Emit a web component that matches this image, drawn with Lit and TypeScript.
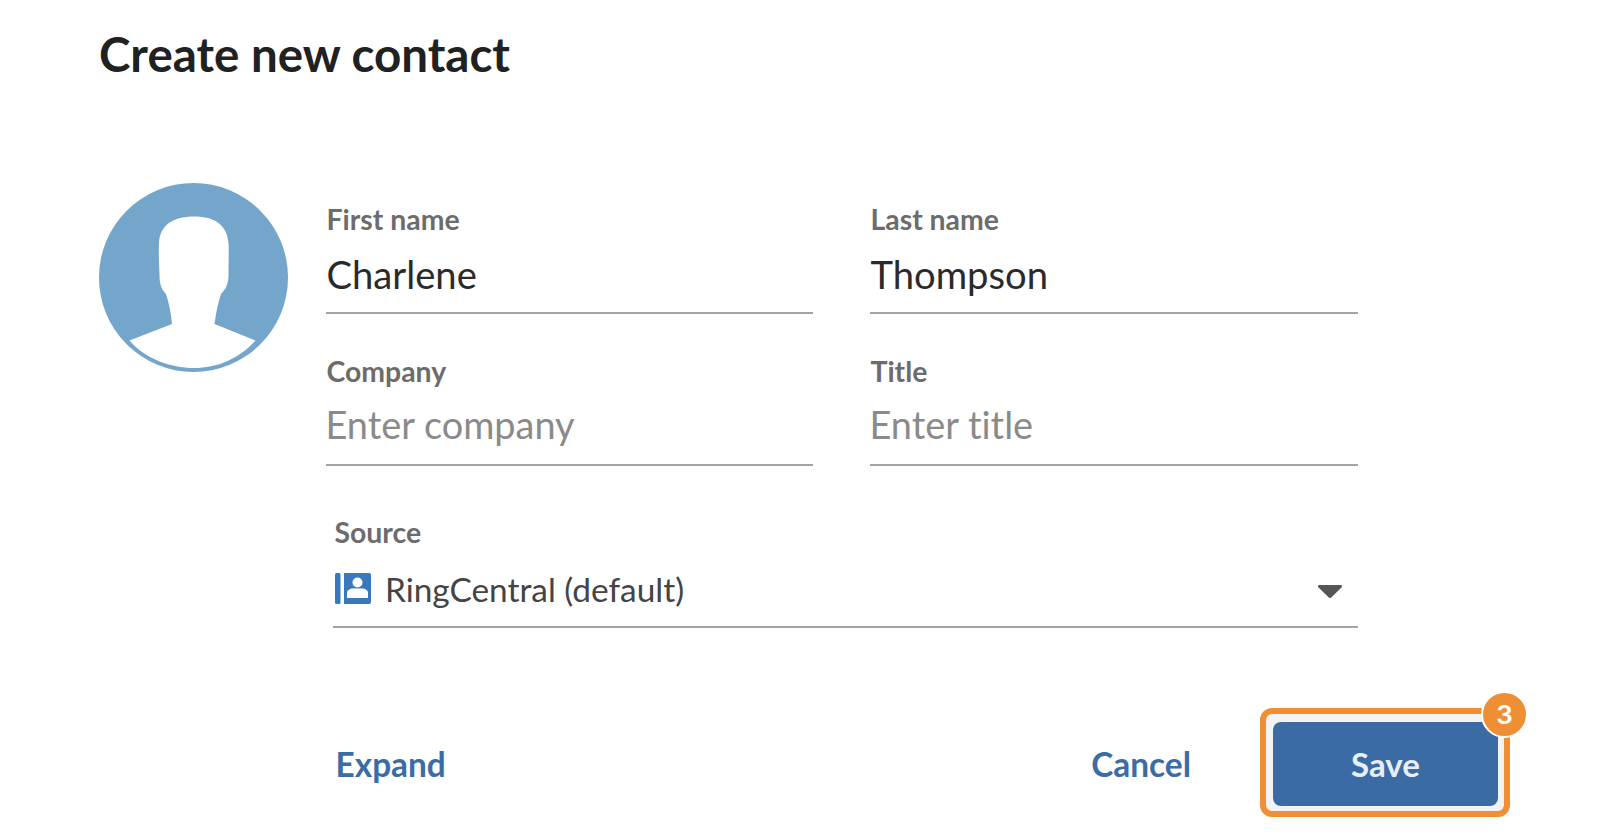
import { LitElement, html, css } from "lit";
import { customElement } from "lit/decorators.js";

@customElement("app-root")
export class AppRoot extends LitElement {
  static styles = css`
    :host { display: block; width: 1600px; height: 834px; background: #fff; font-family: Lato, "Liberation Sans", sans-serif; font-variant-ligatures: none; color: #222; overflow: hidden; }
    .page { display: flex; flex-direction: column; padding: 24px 0 0 99px; }
    h1 { margin: 0; font-size: 47.5px; line-height: 60px; font-weight: 700; color: #1f2123; }
    .body { display: flex; margin-top: 98.5px; }
    .avatar { width: 189px; height: 189px; flex: none; display: block; margin: 0 38px 0 -0.5px; }
    .form { display: flex; flex-direction: column; flex: none; }
    .grid { display: grid; grid-template-columns: 487.5px 488.5px; column-gap: 56.5px; row-gap: 39.5px; margin-top: 19px; }
    .field { display: flex; flex-direction: column; border-bottom: 2px solid #a4a4a4; height: 112.5px; box-sizing: border-box; }
    .label { font-size: 28.4px; line-height: 34px; font-weight: 700; color: #6c6c6c; margin-left: 1px; }
    .value { font-size: 38.2px; line-height: 48px; margin: 14px 0 0 1px; color: #2a2a2a; }
    .ph { font-size: 37.9px; color: #8a8a8a; margin: 13px 0 0 0; }
    .source { display: flex; flex-direction: column; margin: 48.5px 0 0 7px; width: 1025.5px; border-bottom: 2px solid #a4a4a4; height: 113px; box-sizing: border-box; }
    .source .label { margin-left: 2px; }
    .sel { display: flex; align-items: center; gap: 14px; margin-top: 20px; height: 40px; padding-left: 2.5px; }
    .book { width: 36px; height: 31px; flex: none; }
    .sel span { font-size: 33.4px; color: #444; flex: 1; }
    .caret { width: 24px; height: 13px; flex: none; margin: 5px 16px 0 0; }
    .actions { display: flex; align-items: center; margin: 80.5px 0 0 10px; width: 1174.5px; }
    .link { font-size: 33.4px; font-weight: 700; color: #3b6ca6; padding-top: 3px; }
    .spacer { flex: 1; }
    .frame { position: relative; margin-left: 69px; padding: 7.5px 6px 5px 7px; border: 6px solid #ef8f35; border-radius: 12px; background: #f3f3f3; }
    .save { width: 225px; height: 84px; background: #3a6ba5; border-radius: 8px; display: flex; align-items: center; justify-content: center; color: #e8eef6; font-size: 33px; font-weight: 700; }
    .badge { position: absolute; right: -24px; top: -23px; width: 43px; height: 43px; border-radius: 50%; background: #ef8f35; color: #fff; border: 2.5px solid #fff; font-family: Inter, "Liberation Sans", sans-serif; font-size: 26px; font-weight: 600; display: flex; align-items: center; justify-content: center; }
  `;

  render() {
    return html`<div class="page">
      <h1>Create new contact</h1>
      <div class="body">
        <svg class="avatar" viewBox="0 0 189 189">
          <circle cx="94.5" cy="94.5" r="94.5" fill="#74a5ca"></circle>
          <path fill="#fff" d="M30.5 157.5 L73 141 C72 130 70 120 67 111 C62 106 60.5 100 60.5 92 C60 80 59.5 68 60 60 C61 42 74 33.5 95 33.5 C116 33.5 128 42 129.5 60 C130 68 129.5 80 129.5 92 C129.5 100 127 106 122 111 C119 120 117 130 115.5 141 L156.5 157.5 C140 176 118 185 95 185 C72 185 46 176 30.5 157.5 Z"></path>
        </svg>
        <div class="form">
          <div class="grid">
            <div class="field"><div class="label">First name</div><div class="value">Charlene</div></div>
            <div class="field"><div class="label">Last name</div><div class="value">Thompson</div></div>
            <div class="field"><div class="label">Company</div><div class="value ph">Enter company</div></div>
            <div class="field"><div class="label">Title</div><div class="value ph">Enter title</div></div>
          </div>
          <div class="source">
            <div class="label">Source</div>
            <div class="sel">
              <svg class="book" viewBox="0 0 36 31">
                <rect x="0" y="0" width="5.5" height="31" rx="1.5" fill="#3a78bd"></rect>
                <path fill="#3a78bd" d="M9 0 H34 a2 2 0 0 1 2 2 V29 a2 2 0 0 1 -2 2 H9 Z"></path>
                <circle cx="22.5" cy="9.5" r="5" fill="#fff"></circle>
                <path fill="#fff" d="M12 25 V20 C12 17 15 15.5 18 15.5 H27 C30 15.5 33 17 33 20 V25 Z"></path>
              </svg>
              <span>RingCentral (default)</span>
              <svg class="caret" viewBox="0 0 24 13"><path fill="#555" d="M1.5 0 H22.5 C24 0 24.5 1.5 23.5 2.5 L13.5 12.3 C12.6 13.2 11.4 13.2 10.5 12.3 L0.5 2.5 C-0.5 1.5 0 0 1.5 0 Z"></path></svg>
            </div>
          </div>
          <div class="actions">
            <div class="link">Expand</div>
            <div class="spacer"></div>
            <div class="link">Cancel</div>
            <div class="frame"><div class="save">Save</div><div class="badge">3</div></div>
          </div>
        </div>
      </div>
    </div>`;
  }
}
